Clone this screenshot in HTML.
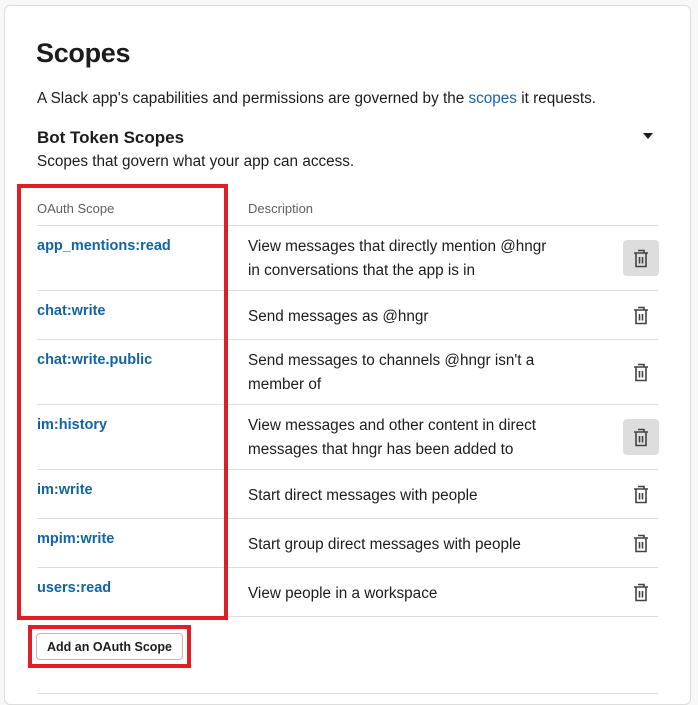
<!DOCTYPE html>
<html><head><meta charset="utf-8"><style>
*{margin:0;padding:0;box-sizing:border-box}
body{width:698px;height:696px;background:#f8f8f8;font-family:"Liberation Sans",sans-serif;color:#1d1c1d;position:relative;overflow:hidden}
.card{position:absolute;left:4px;top:5px;width:687px;height:700px;background:#fff;border:1px solid #ddd;border-radius:6px}
.a{position:absolute;white-space:nowrap}
.hl{position:absolute;left:37px;width:621px;height:1px;background:#ddd}
.sc{position:absolute;left:37px;font-size:14.5px;font-weight:bold;color:#1264a3}
.d{position:absolute;left:248px;font-size:15.3px;line-height:24px;color:#1d1c1d;white-space:nowrap}
.t{position:absolute;left:623px;width:36px;height:36px;border-radius:4px;display:flex;align-items:center;justify-content:center}
.t.g{background:#ddd}
.red{position:absolute;border:4px solid #e01e25}
</style></head><body>
<div class="card"></div>
<div class="a" style="left:36px;top:38px;font-size:27px;font-weight:bold;letter-spacing:-0.3px">Scopes</div>
<div class="a" style="left:37px;top:90px;font-size:15.3px">A Slack app's capabilities and permissions are governed by the <span style="color:#1264a3">scopes</span> it requests.</div>
<div class="a" style="left:37px;top:128px;font-size:17px;font-weight:bold">Bot Token Scopes</div>
<div class="a" style="left:37px;top:153px;font-size:15.3px">Scopes that govern what your app can access.</div>
<div class="a" style="left:643px;top:133px;width:0;height:0;border-left:5px solid transparent;border-right:5px solid transparent;border-top:6px solid #1d1c1d"></div>
<div class="a" style="left:37px;top:201px;font-size:13px;color:#616061">OAuth Scope</div>
<div class="a" style="left:248px;top:201px;font-size:13px;color:#616061">Description</div>
<div class="hl" style="top:225px"></div><div class="hl" style="top:290px"></div><div class="hl" style="top:339px"></div><div class="hl" style="top:404px"></div><div class="hl" style="top:469px"></div><div class="hl" style="top:518px"></div><div class="hl" style="top:567px"></div><div class="hl" style="top:616px"></div><div class="hl" style="top:693px"></div>

<div class="sc" style="top:238px">app_mentions:read</div>
<div class="d" style="top:235px">View messages that directly mention @hngr<br>in conversations that the app is in</div>
<div class="sc" style="top:303px">chat:write</div>
<div class="d" style="top:305px">Send messages as @hngr</div>
<div class="sc" style="top:352px">chat:write.public</div>
<div class="d" style="top:349px">Send messages to channels @hngr isn't a<br>member of</div>
<div class="sc" style="top:417px">im:history</div>
<div class="d" style="top:414px">View messages and other content in direct<br>messages that hngr has been added to</div>
<div class="sc" style="top:482px">im:write</div>
<div class="d" style="top:484px">Start direct messages with people</div>
<div class="sc" style="top:531px">mpim:write</div>
<div class="d" style="top:533px">Start group direct messages with people</div>
<div class="sc" style="top:580px">users:read</div>
<div class="d" style="top:582px">View people in a workspace</div>

<svg width="0" height="0" style="position:absolute"><defs><g id="tr" fill="none" stroke="#454245" stroke-width="1.6"><path d="M5 1.5h6v2.5M1 4h14M3 4v13.5h10V4M6.5 8v6.5M9.5 8v6.5"/></g></defs></svg>
<div class="t g" style="top:240px"><svg width="16" height="19"><use href="#tr"/></svg></div>
<div class="t" style="top:297px"><svg width="16" height="19"><use href="#tr"/></svg></div>
<div class="t" style="top:354px"><svg width="16" height="19"><use href="#tr"/></svg></div>
<div class="t g" style="top:419px"><svg width="16" height="19"><use href="#tr"/></svg></div>
<div class="t" style="top:476px"><svg width="16" height="19"><use href="#tr"/></svg></div>
<div class="t" style="top:525px"><svg width="16" height="19"><use href="#tr"/></svg></div>
<div class="t" style="top:574px"><svg width="16" height="19"><use href="#tr"/></svg></div>

<div class="a" style="left:36px;top:633px;width:147px;height:27px;border:1px solid #bbb;border-radius:4px;font-size:12.5px;font-weight:bold;display:flex;align-items:center;justify-content:center">Add an OAuth Scope</div>
<div class="red" style="left:17px;top:184px;width:211px;height:436px"></div>
<div class="red" style="left:28px;top:625px;width:163px;height:43px"></div>
</body></html>
